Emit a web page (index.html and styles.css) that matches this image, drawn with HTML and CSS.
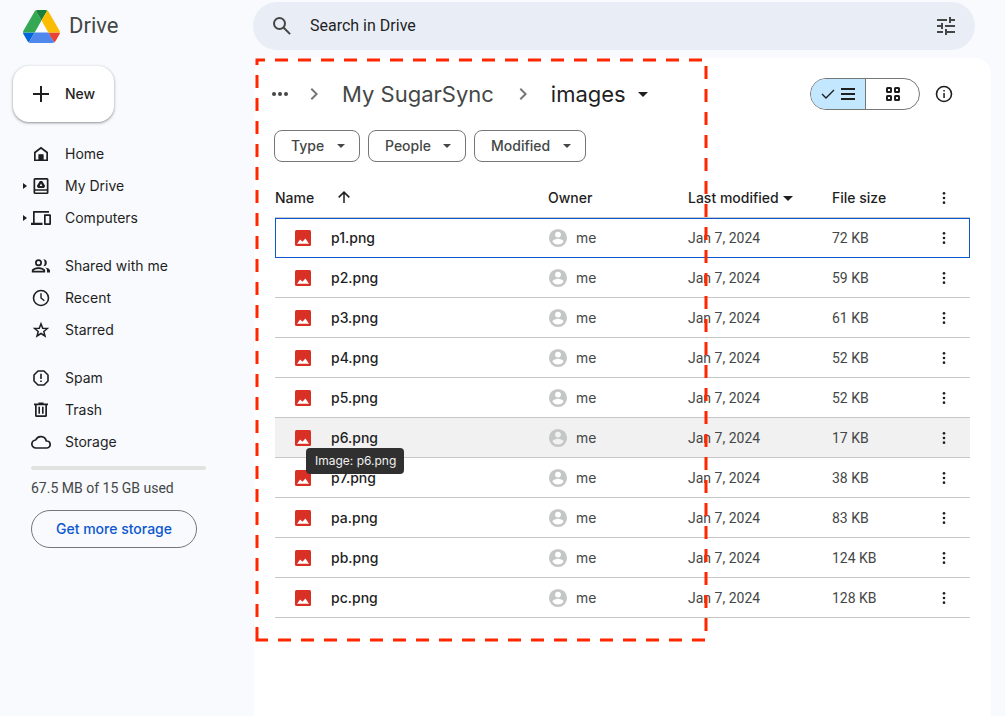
FILE: index.html
```html
<!DOCTYPE html>
<html lang="en">
<head>
  <meta charset="UTF-8">
  <meta name="viewport" content="width=device-width, initial-scale=1.0">
  <title>images - Drive</title>
  <link rel="stylesheet" href="styles.css">
</head>
<body>
  <svg class="symbols" aria-hidden="true">
    <symbol id="caret" viewBox="0 0 10 5"><path d="M0 0h10L5 5z"/></symbol>
    <symbol id="chevron" viewBox="0 0 24 24"><path d="M10 6 8.6 7.4 13.2 12l-4.6 4.6L10 18l6-6z"/></symbol>
    <symbol id="dots" viewBox="0 0 24 24"><circle cx="12" cy="5" r="2"/><circle cx="12" cy="12" r="2"/><circle cx="12" cy="19" r="2"/></symbol>
    <symbol id="image" viewBox="0 0 16 16"><rect width="16" height="16" rx="1.5" fill="#d93025"/><path d="M2 13.7 5.2 9.4l2.2 2.4L10.4 8.4l3.6 5.3z" fill="#fff"/></symbol>
    <symbol id="person" viewBox="1 1 22 22"><path d="M12 2a10 10 0 1 0 0 20 10 10 0 0 0 0-20zm0 3a3.2 3.2 0 1 1 0 6.4A3.2 3.2 0 0 1 12 5zm0 14.2a7.2 7.2 0 0 1-6-3.2c0-2 4-3.1 6-3.1s6 1.1 6 3.1a7.2 7.2 0 0 1-6 3.2z"/></symbol>
  </svg>

  <div class="app">
    <aside class="sidebar">
      <a class="logo" href="#">
        <svg class="logoMark" viewBox="0 0 87.3 78">
          <path d="m6.6 66.85 3.85 6.65c.8 1.4 1.95 2.5 3.3 3.3l13.75-23.8h-27.5c0 1.55.4 3.1 1.2 4.5z" fill="#0066da"/>
          <path d="m43.65 25-13.75-23.8c-1.35.8-2.5 1.9-3.3 3.3l-25.4 44a9.06 9.06 0 0 0 -1.2 4.5h27.5z" fill="#34a853"/>
          <path d="m73.55 76.8c1.35-.8 2.5-1.9 3.3-3.3l1.6-2.75 7.65-13.25c.8-1.4 1.2-2.95 1.2-4.5h-27.5l5.85 11.5z" fill="#ea4335"/>
          <path d="m43.65 25 13.75-23.8c-1.35-.8-2.9-1.2-4.5-1.2h-18.5c-1.6 0-3.15.45-4.5 1.2z" fill="#188038"/>
          <path d="m59.8 53h-32.3l-13.75 23.8c1.35.8 2.9 1.2 4.5 1.2h50.8c1.6 0 3.15-.45 4.5-1.2z" fill="#4f87ed"/>
          <path d="m73.4 26.5-12.7-22c-.8-1.4-1.95-2.5-3.3-3.3l-13.75 23.8 16.15 28h27.45c0-1.55-.4-3.1-1.2-4.5z" fill="#fbbc04"/>
        </svg>
        <span>Drive</span>
      </a>

      <button class="newButton" type="button">
        <svg viewBox="0 0 16 16"><path d="M7 0h2v7h7v2H9v7H7V9H0V7h7z"/></svg>
        New
      </button>

      <nav>
        <ul class="navGroup">
          <li><a href="#"><svg class="icon" viewBox="0 0 20 20"><path fill-rule="evenodd" d="M10 2.8 17 8v9H3V8zM4.7 8.9v6.5h2.9v-5h4.8v5h2.9V8.9L10 4.9z"/><path d="M7.6 10.4h4.8V16H7.6z"/></svg>Home</a></li>
          <li><a class="expandable" href="#"><svg class="icon" viewBox="0 0 20 20"><path fill-rule="evenodd" d="M4 2h12a1.5 1.5 0 0 1 1.5 1.5v13A1.5 1.5 0 0 1 16 18H4a1.5 1.5 0 0 1-1.5-1.5v-13A1.5 1.5 0 0 1 4 2zm.2 1.7v9.6h11.6V3.7zm0 11v1.7h11.6v-1.7zM8.8 5h2.4l3 5-1.2 2H7l-1.2-2zM10 7.6 8.7 9.9h2.6z"/></svg>My Drive</a></li>
          <li><a class="expandable" href="#"><svg class="icon" viewBox="0 0 20 20"><path fill-rule="evenodd" d="M2.5 3H18v1.7H3.7v10h7.8V17H0v-2.3h2V3.5zM13.5 6.2H19a1 1 0 0 1 1 1V16a1 1 0 0 1-1 1h-5a1 1 0 0 1-1-1V6.7zm1.2 1.7v7.4h3.6V7.9z"/></svg>Computers</a></li>
        </ul>
        <ul class="navGroup">
          <li><a href="#"><svg class="icon" viewBox="0 0 20 20"><path fill-rule="evenodd" d="M7.5 3.2a3.5 3.5 0 1 1 0 7 3.5 3.5 0 0 1 0-7zm0 1.7a1.8 1.8 0 1 0 0 3.6 1.8 1.8 0 0 0 0-3.6zM.8 16.5v-2c0-2 3.7-3.3 6.7-3.3s6.7 1.3 6.7 3.3v2zm1.7-1.7h10c-.3-.9-2.8-1.9-5-1.9s-4.7 1-5 1.9z"/><path d="M12.3 3.2a3.5 3.5 0 0 1 0 7 5 5 0 0 0 0-7zM14.2 11.4c2.5.4 4.8 1.5 4.8 3.2v1.9h-3v-2c0-1.3-.7-2.3-1.8-3.1z"/></svg>Shared with me</a></li>
          <li><a href="#"><svg class="icon" viewBox="0 0 20 20"><circle cx="10" cy="10" r="7.5" fill="none" stroke="currentColor" stroke-width="1.6"/><path d="M10 5.2V10l3.4 2.8" fill="none" stroke="currentColor" stroke-width="1.4"/></svg>Recent</a></li>
          <li><a href="#"><svg class="icon" viewBox="0 0 20 20"><path d="m10 3.8 1.7 4.4 4.7.3-3.6 3 1.2 4.5-4-2.5L6 16l1.2-4.5-3.6-3 4.7-.3z" fill="none" stroke="currentColor" stroke-width="1.5"/></svg>Starred</a></li>
        </ul>
        <ul class="navGroup">
          <li><a href="#"><svg class="icon" viewBox="0 0 20 20"><path d="M7 3h6l4 4v6l-4 4H7l-4-4V7z" fill="none" stroke="currentColor" stroke-width="1.6" stroke-linejoin="round"/><path d="M9.2 5.8h1.6V11H9.2zM9.2 12.4h1.6V14H9.2z"/></svg>Spam</a></li>
          <li><a href="#"><svg class="icon" viewBox="0 0 20 20"><path fill-rule="evenodd" d="M7.5 2.5h5v1H17v1.7h-1v10.3a1.5 1.5 0 0 1-1.5 1.5h-9A1.5 1.5 0 0 1 4 15.5V5.2H3V3.5h4.5zM5.7 5.2v10.1h8.6V5.2z"/><path d="M7.4 6.8H9v7H7.4zM11 6.8h1.6v7H11z"/></svg>Trash</a></li>
          <li><a href="#"><svg class="icon" viewBox="0 0 20 20"><path d="M5 16a4 4 0 0 1-.3-8A5.6 5.6 0 0 1 15.3 9a3.5 3.5 0 0 1 .7 7z" fill="none" stroke="currentColor" stroke-width="1.7" stroke-linejoin="round"/></svg>Storage</a></li>
        </ul>
      </nav>

      <div class="storage">
        <progress id="quota" value="0" max="15"></progress>
        <label for="quota">67.5 MB of 15 GB used</label>
        <button class="storageButton" type="button">Get more storage</button>
      </div>
    </aside>

    <div class="content">
      <form class="search">
        <button type="button" aria-label="Search"><svg viewBox="0 0 18 18"><circle cx="6.5" cy="6.5" r="5.5" fill="none" stroke="currentColor" stroke-width="2"/><path d="m10.5 10.5 6.6 6.6" stroke="currentColor" stroke-width="2"/></svg></button>
        <input type="text" placeholder="Search in Drive" aria-label="Search in Drive">
        <button type="button" aria-label="Advanced search"><svg viewBox="0 0 18 18"><path d="M0 14v2h6v-2zM0 2v2h10V2zm10 16v-2h8v-2h-8v-2H8v6zM4 6v2H0v2h4v2h2V6zm14 4V8H8v2zm-6-4h2V4h4V2h-4V0h-2z"/></svg></button>
      </form>

      <main class="panel">
        <div class="toolbar">
          <nav class="breadcrumbs">
            <button type="button" class="more" aria-label="Show path"><svg viewBox="0 0 16 4"><circle cx="2" cy="2" r="2"/><circle cx="8" cy="2" r="2"/><circle cx="14" cy="2" r="2"/></svg></button>
            <svg class="chevron"><use href="#chevron"/></svg>
            <a href="#">My SugarSync</a>
            <svg class="chevron"><use href="#chevron"/></svg>
            <button type="button" class="current">images <svg class="caret"><use href="#caret"/></svg></button>
          </nav>
          <div class="viewSwitch">
            <button type="button" class="selected" aria-label="List layout" aria-pressed="true">
              <svg class="check" viewBox="0 0 14 10"><path d="m1 5 4 4 8-8" fill="none" stroke="currentColor" stroke-width="1.4"/></svg>
              <svg class="list" viewBox="0 0 14 12"><path d="M0 0h14v2H0zM0 5h14v2H0zM0 10h14v2H0z"/></svg>
            </button>
            <button type="button" aria-label="Grid layout" aria-pressed="false">
              <svg class="grid" viewBox="0 0 14 14"><g fill="none" stroke="currentColor" stroke-width="2"><rect x="1" y="1" width="4" height="4" rx=".5"/><rect x="9" y="1" width="4" height="4" rx=".5"/><rect x="1" y="9" width="4" height="4" rx=".5"/><rect x="9" y="9" width="4" height="4" rx=".5"/></g></svg>
            </button>
          </div>
          <button type="button" class="info" aria-label="View details"><svg viewBox="0 0 18 18"><circle cx="9" cy="9" r="7.5" fill="none" stroke="currentColor" stroke-width="1.6"/><path d="M8.3 8h1.5v5H8.3zM8.3 5h1.5v1.6H8.3z"/></svg></button>
        </div>

        <div class="filters">
          <label class="chip"><select aria-label="Type"><option>Type</option></select><svg class="smallCaret"><use href="#caret"/></svg></label>
          <label class="chip"><select aria-label="People"><option>People</option></select><svg class="smallCaret"><use href="#caret"/></svg></label>
          <label class="chip"><select aria-label="Modified"><option>Modified</option></select><svg class="smallCaret"><use href="#caret"/></svg></label>
        </div>

        <table class="files">
          <thead>
            <tr>
              <th class="name">Name <svg class="sort" viewBox="0 0 12 12"><path d="M6 12V1.2M.7 6.4 6 1.1l5.3 5.3" fill="none" stroke="currentColor" stroke-width="1.5"/></svg></th>
              <th class="owner">Owner</th>
              <th class="date">Last modified <svg class="caret"><use href="#caret"/></svg></th>
              <th class="size">File size</th>
              <th class="actions"><button type="button" aria-label="More options"><svg><use href="#dots"/></svg></button></th>
            </tr>
          </thead>
          <tbody id="fileRows"></tbody>
        </table>
      </main>
    </div>

    <svg class="highlight" viewBox="0 0 450 581" aria-hidden="true"><path d="M1 581V1h449v580z"/></svg>
  </div>

  <script>
    var files = [
      ['p1.png', '72 KB', 'focused'],
      ['p2.png', '59 KB', ''],
      ['p3.png', '61 KB', ''],
      ['p4.png', '52 KB', ''],
      ['p5.png', '52 KB', ''],
      ['p6.png', '17 KB', 'hovered'],
      ['p7.png', '38 KB', ''],
      ['pa.png', '83 KB', ''],
      ['pb.png', '124 KB', ''],
      ['pc.png', '128 KB', '']
    ];

    var body = document.getElementById('fileRows');
    for (var i = 0; i < files.length; i++) {
      var file = files[i];
      var tip = file[2] === 'hovered' ? '<span class="tooltip" role="tooltip">Image: ' + file[0] + '</span>' : '';
      var row = body.insertRow(-1);
      row.className = file[2];
      row.innerHTML =
        '<td class="name"><div class="cell"><svg class="fileIcon"><use href="#image"/></svg>' + file[0] + tip + '</div></td>' +
        '<td><div class="cell"><svg class="avatar"><use href="#person"/></svg>me</div></td>' +
        '<td class="detail">Jan 7, 2024</td>' +
        '<td class="detail">' + file[1] + '</td>' +
        '<td class="actions"><button type="button" aria-label="More actions"><svg><use href="#dots"/></svg></button></td>';
    }
  </script>
</body>
</html>
```
FILE: styles.css
```css
* {
    box-sizing: border-box;
}

body {
    margin: 0;
    background-color: #f8fafd;
    color: #1f1f1f;
    font-family: Inter, Roboto, sans-serif;
    font-size: 14px;
    line-height: 20px;
}

a {
    color: inherit;
    text-decoration: none;
}

button, input, select {
    font: inherit;
    color: inherit;
    background: none;
    border: none;
    padding: 0;
    margin: 0;
}

button {
    cursor: pointer;
}

svg {
    display: block;
    flex: none;
    fill: currentColor;
}

.symbols {
    position: absolute;
    width: 0;
    height: 0;
}

.app {
    position: relative;
    display: grid;
    grid-template-columns: 254px 1fr;
    min-height: 100vh;
}

/* Sidebar */
.sidebar {
    padding-top: 2px;
}

.logo {
    display: flex;
    align-items: center;
    gap: 9px;
    height: 48px;
    padding-left: 23px;
    color: #444746;
    font-family: Roboto, sans-serif;
    font-size: 22px;
}

.logoMark {
    width: 37px;
    height: 33px;
}

.newButton {
    display: flex;
    align-items: center;
    gap: 16px;
    height: 56px;
    margin: 16px 0 16px 13px;
    padding: 0 19px 0 20px;
    border-radius: 16px;
    background-color: #fff;
    box-shadow: 0 1px 2px rgba(60, 64, 67, 0.4), 0 1px 3px 1px rgba(60, 64, 67, 0.15);
    font-weight: 500;
}

.newButton svg {
    width: 16px;
    height: 16px;
}

.navGroup {
    list-style: none;
    margin: 0 0 16px;
    padding: 0;
}

.navGroup a {
    display: flex;
    align-items: center;
    gap: 14px;
    height: 32px;
    padding-left: 31px;
}

.navGroup .expandable {
    padding-left: 23px;
}

.expandable::before {
    content: "";
    margin-right: -10px;
    border: 3px solid transparent;
    border-left: 4px solid #1f1f1f;
    border-right: 0;
}

.icon {
    width: 20px;
    height: 20px;
}

.storage {
    display: flex;
    flex-direction: column;
    align-items: flex-start;
    margin: -8px 48px 0 31px;
    color: #444746;
}

.storage progress {
    appearance: none;
    width: 100%;
    height: 4px;
    border-radius: 2px;
    overflow: hidden;
}

.storage progress::-webkit-progress-bar {
    background-color: #e1e3e1;
}

.storage label {
    margin: 8px 0 12px;
    font-family: Roboto, sans-serif;
}

.storageButton {
    height: 38px;
    padding: 0 24px;
    border: 1px solid #747775;
    border-radius: 19px;
    color: #0b57d0;
    font-weight: 500;
}

/* Search */
.content {
    display: flex;
    flex-direction: column;
    min-width: 0;
    padding: 2px 14px 0 0;
}

.search {
    display: flex;
    align-items: center;
    gap: 19px;
    height: 48px;
    margin: 0 16px 0 -1px;
    padding: 0 20px;
    border-radius: 24px;
    background-color: #e9eef6;
    color: #444746;
}

.search svg {
    width: 18px;
    height: 18px;
}

.search input {
    flex: 1;
    min-width: 0;
    outline: none;
    font-family: Roboto, sans-serif;
    font-size: 16px;
}

.search input::placeholder {
    color: #1f1f1f;
    opacity: 1;
}

/* File panel */
.panel {
    flex: 1;
    margin-top: 8px;
    padding: 16px 21px 0;
    border-radius: 16px 16px 0 0;
    background-color: #fff;
}

.toolbar {
    display: flex;
    align-items: center;
    height: 40px;
}

.breadcrumbs {
    display: flex;
    align-items: center;
    flex: 1;
    margin-left: -3px;
    color: #444746;
    font-size: 22px;
    line-height: 32px;
    white-space: nowrap;
}

.breadcrumbs a {
    margin-right: 3px;
}

.more svg {
    width: 16px;
    height: 4px;
}

.chevron {
    width: 24px;
    height: 24px;
    margin: 0 16px 0 14px;
    color: #747775;
}

.current {
    display: flex;
    align-items: center;
    gap: 12px;
    color: #1f1f1f;
}

.caret {
    width: 10px;
    height: 5px;
}

.smallCaret {
    width: 8px;
    height: 4px;
}

.viewSwitch {
    display: flex;
    height: 32px;
    border: 1px solid #747775;
    border-radius: 16px;
    overflow: hidden;
}

.viewSwitch button {
    display: flex;
    align-items: center;
    justify-content: center;
    gap: 6px;
    width: 53px;
}

.viewSwitch .selected {
    width: 55px;
    background-color: #c2e7ff;
    border-right: 1px solid #747775;
}

.check {
    width: 14px;
    height: 10px;
}

.list {
    width: 14px;
    height: 12px;
}

.grid {
    width: 14px;
    height: 14px;
}

.info {
    margin: 0 17px 0 15px;
}

.info svg {
    width: 18px;
    height: 18px;
}

.filters {
    display: flex;
    gap: 8px;
    margin: 16px 0 16px -1px;
    color: #444746;
    font-weight: 500;
}

.chip {
    display: grid;
    align-items: center;
    height: 32px;
    border: 1px solid #747775;
    border-radius: 8px;
}

.chip select, .chip svg {
    grid-area: 1 / 1;
}

.chip select {
    appearance: none;
    height: 30px;
    padding: 0 34px 0 16px;
    cursor: pointer;
}

.chip svg {
    justify-self: end;
    margin-right: 14px;
    pointer-events: none;
}

.files {
    width: 100%;
    table-layout: fixed;
    border-collapse: separate;
    border-spacing: 0;
}

.files th, .files td {
    height: 40px;
    padding: 0;
    border-bottom: 1px solid #c7c7c7;
    text-align: left;
}

.files th {
    font-weight: 500;
}

.files td {
    color: #444746;
}

.files .detail {
    font-family: Roboto, sans-serif;
}

.files th svg {
    display: inline-block;
}

.files .owner {
    width: 140px;
}

.files .date {
    width: 144px;
}

.files .size {
    width: 86px;
}

.files .actions {
    width: 52px;
}

.files .actions button {
    display: block;
    margin: 0 auto;
}

.files .actions svg {
    display: block;
    width: 16px;
    height: 16px;
    color: #1f1f1f;
}

.files .sort {
    width: 12px;
    height: 12px;
    margin-left: 20px;
}

.files .caret {
    margin: 0 0 2px 1px;
}

.files td.name {
    color: #1f1f1f;
    font-weight: 500;
}

.cell {
    position: relative;
    display: flex;
    align-items: center;
    gap: 8px;
}

.name .cell {
    gap: 20px;
    padding-left: 20px;
}

.fileIcon {
    width: 16px;
    height: 16px;
}

.avatar {
    width: 20px;
    height: 20px;
    color: #c4c7c5;
}

.focused {
    outline: 1px solid #0b57d0;
    outline-offset: -1px;
}

.hovered {
    background-color: #f1f1f1;
}

.tooltip {
    position: absolute;
    top: 20px;
    left: 31px;
    z-index: 1;
    padding: 3px 8px 3px 9px;
    border-radius: 4px;
    background-color: #303030;
    color: #f2f2f2;
    font-size: 12px;
    font-weight: 400;
}

/* Dashed frame over the file list */
.highlight {
    position: absolute;
    top: 59px;
    left: 256px;
    z-index: 2;
    width: 450px;
    height: 581px;
    overflow: visible;
    pointer-events: none;
}

.highlight path {
    fill: none;
    stroke: #ff2600;
    stroke-width: 3;
    stroke-dasharray: 13 10;
}
```
